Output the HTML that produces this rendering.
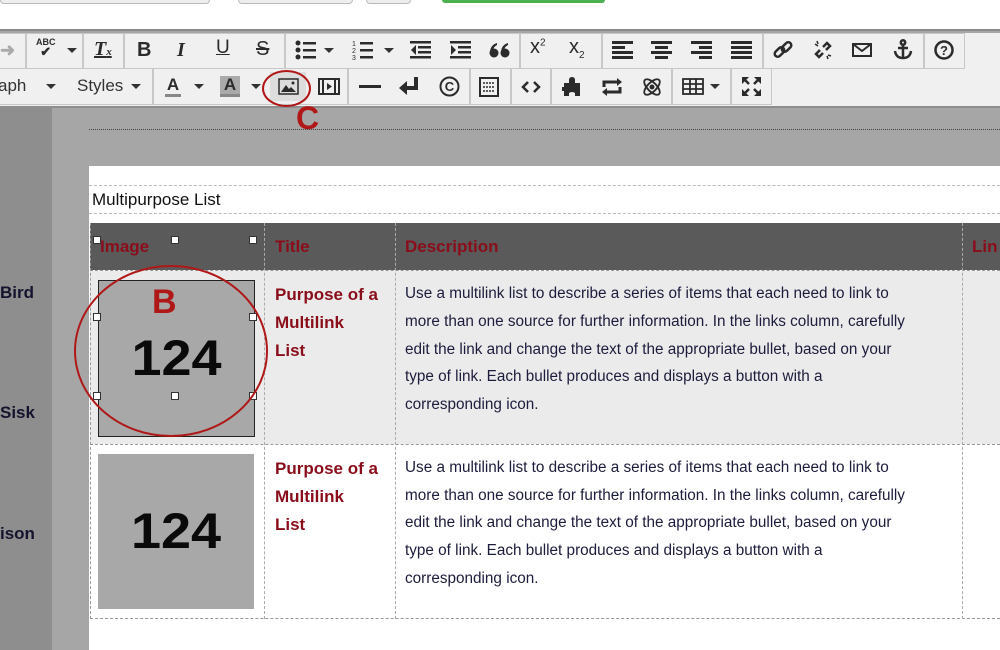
<!DOCTYPE html>
<html><head><meta charset="utf-8"><style>
*{margin:0;padding:0;box-sizing:border-box}
body{width:1000px;height:650px;overflow:hidden;position:relative;background:#a6a6a6;font-family:"Liberation Sans",sans-serif}
.a{position:absolute}
.g{position:absolute;border:1px solid #c8c8c8;background:#f0f0f0}
.i{position:absolute;color:#2b2b2b;font-weight:bold;text-align:center}
.car{position:absolute;width:0;height:0;border-left:5px solid transparent;border-right:5px solid transparent;border-top:5px solid #333}
.d{position:absolute;white-space:nowrap;font-size:15.3px;color:#1c1c3c;left:405px}
.t{position:absolute;left:275px;font-size:17px;font-weight:bold;color:#8a0d1a;white-space:nowrap}
.h{position:absolute;width:8px;height:8px;background:#fff;border:1px solid #333}
.n{position:absolute;font-size:50px;font-weight:bold;color:#0a0a0a;text-align:center;transform:scaleX(1.08)}
</style></head><body>
<div class="a" style="left:0;top:0;width:1000px;height:31px;background:#fff;border-bottom:2px solid #8a8a8a"></div>
<div class="a" style="left:0;top:0;width:210px;height:4px;border:1px solid #bbb;border-top:none;border-radius:0 0 4px 4px;background:#eee"></div>
<div class="a" style="left:238px;top:0;width:115px;height:4px;border:1px solid #bbb;border-top:none;border-radius:0 0 4px 4px;background:#eee"></div>
<div class="a" style="left:366px;top:0;width:45px;height:4px;border:1px solid #bbb;border-top:none;border-radius:0 0 4px 4px;background:#eee"></div>
<div class="a" style="left:442px;top:0;width:163px;height:3px;background:#4caf50;border-radius:0 0 3px 3px"></div>
<div class="a" style="left:0;top:33px;width:1000px;height:75px;background:#f0f0f0;border-bottom:2px solid #8e8e8e"></div>
<div class="g" style="left:-2px;top:33px;width:28px;height:36px"></div>
<div class="g" style="left:26px;top:33px;width:57px;height:36px"></div>
<div class="g" style="left:83px;top:33px;width:41px;height:36px"></div>
<div class="g" style="left:124px;top:33px;width:161px;height:36px"></div>
<div class="g" style="left:285px;top:33px;width:235px;height:36px"></div>
<div class="g" style="left:520px;top:33px;width:82px;height:36px"></div>
<div class="g" style="left:602px;top:33px;width:161px;height:36px"></div>
<div class="g" style="left:763px;top:33px;width:161px;height:36px"></div>
<div class="g" style="left:924px;top:33px;width:41px;height:36px"></div>
<div class="g" style="left:-2px;top:68px;width:155px;height:37px"></div>
<div class="g" style="left:153px;top:68px;width:195px;height:37px"></div>
<div class="g" style="left:348px;top:68px;width:122px;height:37px"></div>
<div class="g" style="left:470px;top:68px;width:41px;height:37px"></div>
<div class="g" style="left:511px;top:68px;width:40px;height:37px"></div>
<div class="g" style="left:551px;top:68px;width:121px;height:37px"></div>
<div class="g" style="left:672px;top:68px;width:59px;height:37px"></div>
<div class="g" style="left:731px;top:68px;width:41px;height:37px"></div>
<div class="i" style="left:0;top:40px;font-size:18px;color:#aaa">➜</div>
<div class="i" style="left:36px;top:38px;font-size:9px;line-height:9px">ABC<br><span style="font-size:13px">✔</span></div>
<div class="car" style="left:67px;top:48px"></div>
<div class="i" style="left:94px;top:38px;font-size:20px;font-style:italic;font-family:'Liberation Serif',serif;text-decoration:underline">T<span style="font-size:11px">x</span></div>
<div class="i" style="left:137px;top:39px;font-size:20px">B</div>
<div class="i" style="left:177px;top:39px;font-size:20px;font-style:italic;font-family:'Liberation Serif',serif">I</div>
<div class="i" style="left:216px;top:37px;font-size:19px;text-decoration:underline;font-weight:normal">U</div>
<div class="i" style="left:256px;top:38px;font-size:20px;text-decoration:line-through;font-weight:normal">S</div>
<svg class="a" style="left:295px;top:40px" width="22" height="20"><g fill="#2b2b2b"><circle cx="3" cy="3" r="2.5"/><circle cx="3" cy="10" r="2.5"/><circle cx="3" cy="17" r="2.5"/><rect x="8" y="2" width="13" height="2.5"/><rect x="8" y="9" width="13" height="2.5"/><rect x="8" y="16" width="13" height="2.5"/></g></svg>
<div class="car" style="left:324px;top:48px"></div>
<svg class="a" style="left:352px;top:40px" width="22" height="20"><g fill="#2b2b2b"><text x="0" y="6" font-size="7" font-family="Liberation Sans">1</text><text x="0" y="13" font-size="7" font-family="Liberation Sans">2</text><text x="0" y="20" font-size="7" font-family="Liberation Sans">3</text><rect x="8" y="2" width="13" height="2.5"/><rect x="8" y="9" width="13" height="2.5"/><rect x="8" y="16" width="13" height="2.5"/></g></svg>
<div class="car" style="left:384px;top:48px"></div>
<svg class="a" style="left:410px;top:41px" width="21" height="18"><g fill="#2b2b2b"><rect x="0" y="0" width="21" height="2.5"/><rect x="8" y="5" width="13" height="2.5"/><rect x="8" y="10" width="13" height="2.5"/><rect x="0" y="15" width="21" height="2.5"/><path d="M6 4 L1 9 L6 14Z"/></g></svg>
<svg class="a" style="left:450px;top:41px" width="21" height="18"><g fill="#2b2b2b"><rect x="0" y="0" width="21" height="2.5"/><rect x="8" y="5" width="13" height="2.5"/><rect x="8" y="10" width="13" height="2.5"/><rect x="0" y="15" width="21" height="2.5"/><path d="M1 4 L6 9 L1 14Z"/></g></svg>
<svg class="a" style="left:489px;top:42px" width="22" height="16"><g fill="#2b2b2b"><circle cx="5" cy="11" r="4.5"/><circle cx="16" cy="11" r="4.5"/><path d="M1 11 Q1 3 8 1 L8 3 Q4 5 4 9Z M12 11 Q12 3 19 1 L19 3 Q15 5 15 9Z"/></g></svg>
<div class="i" style="left:530px;top:36px;font-size:20px;font-weight:normal">x<sup style="font-size:10px">2</sup></div>
<div class="i" style="left:569px;top:36px;font-size:20px;font-weight:normal">x<sub style="font-size:10px">2</sub></div>
<svg class="a" style="left:612px;top:41px" width="21" height="18"><g fill="#2b2b2b"><rect x="0" y="0" width="21" height="3"/><rect x="0" y="5" width="13" height="3"/><rect x="0" y="10" width="21" height="3"/><rect x="0" y="15" width="21" height="3"/></g></svg>
<svg class="a" style="left:651px;top:41px" width="21" height="18"><g fill="#2b2b2b"><rect x="0" y="0" width="21" height="3"/><rect x="4" y="5" width="13" height="3"/><rect x="0" y="10" width="21" height="3"/><rect x="4" y="15" width="13" height="3"/></g></svg>
<svg class="a" style="left:691px;top:41px" width="21" height="18"><g fill="#2b2b2b"><rect x="0" y="0" width="21" height="3"/><rect x="8" y="5" width="13" height="3"/><rect x="0" y="10" width="21" height="3"/><rect x="8" y="15" width="13" height="3"/></g></svg>
<svg class="a" style="left:731px;top:41px" width="21" height="18"><g fill="#2b2b2b"><rect x="0" y="0" width="21" height="3"/><rect x="0" y="5" width="21" height="3"/><rect x="0" y="10" width="21" height="3"/><rect x="0" y="15" width="21" height="3"/></g></svg>
<svg class="a" style="left:773px;top:40px" width="20" height="20"><g fill="none" stroke="#2b2b2b" stroke-width="2.5"><rect x="1" y="9" width="11" height="6" rx="3" transform="rotate(-45 6.5 12)"/><rect x="8" y="4" width="11" height="6" rx="3" transform="rotate(-45 13.5 7)"/></g></svg>
<svg class="a" style="left:813px;top:40px" width="20" height="20"><g fill="none" stroke="#2b2b2b" stroke-width="2.5"><path d="M7 10 L3 14 L6 17 L10 13"/><path d="M13 10 L17 6 L14 3 L10 7"/><path d="M2 4l3 2M4 1l1 3M15 19l-1-3M18 16l-3-1" stroke-width="1.5"/></g></svg>
<svg class="a" style="left:852px;top:43px" width="20" height="14"><g fill="none" stroke="#2b2b2b" stroke-width="2"><rect x="1" y="1" width="18" height="12"/><path d="M1 1 L10 8 L19 1"/></g></svg>
<svg class="a" style="left:893px;top:39px" width="20" height="21"><g fill="none" stroke="#2b2b2b" stroke-width="2.5"><circle cx="10" cy="3.5" r="2.2"/><path d="M10 6 V19 M5 9 H15 M2 12 Q3 19 10 19 Q17 19 18 12"/></g></svg>
<svg class="a" style="left:934px;top:40px" width="20" height="20"><circle cx="10" cy="10" r="8.5" fill="none" stroke="#2b2b2b" stroke-width="2.5"/><text x="10" y="15" font-size="13" font-weight="bold" text-anchor="middle" fill="#2b2b2b" font-family="Liberation Sans">?</text></svg>
<div class="a" style="left:-2px;top:76px;font-size:17px;color:#333">aph</div>
<div class="car" style="left:46px;top:84px"></div>
<div class="a" style="left:77px;top:76px;font-size:17px;color:#333">Styles</div>
<div class="car" style="left:131px;top:84px"></div>
<div class="i" style="left:165px;top:76px;font-size:17px;border-bottom:3px solid #888;line-height:18px;width:16px">A</div>
<div class="car" style="left:194px;top:84px"></div>
<div class="i" style="left:220px;top:76px;font-size:17px;background:#aaa;border-bottom:3px solid #888;line-height:18px;width:20px">A</div>
<div class="car" style="left:251px;top:84px"></div>
<div class="a" style="left:270px;top:72px;width:36px;height:29px;background:#ddd"></div>
<svg class="a" style="left:278px;top:78px" width="21" height="17"><rect x="1" y="1" width="19" height="15" fill="none" stroke="#2b2b2b" stroke-width="1.5"/><path d="M3 14 L8 7 L11 11 L13 9 L18 14Z" fill="#2b2b2b"/><circle cx="15" cy="5" r="1.5" fill="#2b2b2b"/></svg>
<svg class="a" style="left:318px;top:78px" width="22" height="17"><rect x="1" y="1" width="20" height="15" fill="none" stroke="#2b2b2b" stroke-width="2"/><path d="M5 1V16M17 1V16" stroke="#2b2b2b" stroke-width="2"/><path d="M9 5 L14 8.5 L9 12Z" fill="#2b2b2b"/></svg>
<div class="a" style="left:359px;top:85px;width:22px;height:3px;background:#2b2b2b"></div>
<svg class="a" style="left:398px;top:76px" width="22" height="20"><path d="M18 1 V12 H7" fill="none" stroke="#2b2b2b" stroke-width="4"/><path d="M9 5 L1 12 L9 19Z" fill="#2b2b2b"/></svg>
<svg class="a" style="left:439px;top:76px" width="21" height="21"><circle cx="10.5" cy="10.5" r="9" fill="none" stroke="#2b2b2b" stroke-width="2"/><text x="10.5" y="15" font-size="13" font-weight="bold" text-anchor="middle" fill="#2b2b2b" font-family="Liberation Sans">C</text></svg>
<svg class="a" style="left:479px;top:77px" width="20" height="20"><rect x="1" y="1" width="18" height="18" fill="none" stroke="#2b2b2b" stroke-width="2"/><path d="M4 6H16M4 10H16M4 14H16" stroke="#2b2b2b" stroke-width="1.5" stroke-dasharray="2 1"/></svg>
<svg class="a" style="left:521px;top:80px" width="20" height="14"><path d="M7 2 L2 7 L7 12 M13 2 L18 7 L13 12" fill="none" stroke="#2b2b2b" stroke-width="2.5"/></svg>
<svg class="a" style="left:561px;top:76px" width="22" height="21"><path d="M3 7 H8 V4 Q8 1 11 1 Q14 1 14 4 V7 H19 V20 H14 V17 Q11 15 8 17 V20 H3 V15 H1 V11 H3Z" fill="#2b2b2b"/></svg>
<svg class="a" style="left:601px;top:77px" width="22" height="20"><g fill="none" stroke="#2b2b2b" stroke-width="3"><path d="M3 10 V5 H17"/><path d="M19 10 V15 H5"/></g><path d="M16 1 L21 5 L16 9Z M6 11 L1 15 L6 19Z" fill="#2b2b2b"/></svg>
<svg class="a" style="left:641px;top:76px" width="22" height="22"><g fill="none" stroke="#2b2b2b" stroke-width="1.8"><ellipse cx="11" cy="11" rx="10" ry="4.5" transform="rotate(45 11 11)"/><ellipse cx="11" cy="11" rx="10" ry="4.5" transform="rotate(-45 11 11)"/></g><circle cx="11" cy="11" r="2.5" fill="#2b2b2b"/></svg>
<svg class="a" style="left:682px;top:78px" width="22" height="17"><g fill="none" stroke="#2b2b2b" stroke-width="1.8"><rect x="1" y="1" width="20" height="15"/><path d="M1 6H21M1 11H21M8 1V16M14 1V16"/></g></svg>
<div class="car" style="left:710px;top:84px"></div>
<svg class="a" style="left:741px;top:76px" width="21" height="21"><g fill="#2b2b2b"><path d="M1 1H8L1 8Z M20 1H13L20 8Z M1 20H8L1 13Z M20 20H13L20 13Z"/></g><g stroke="#2b2b2b" stroke-width="2.5"><path d="M3 3L8 8M18 3L13 8M3 18L8 13M18 18L13 13"/></g></svg>
<div class="a" style="left:262px;top:70px;width:49px;height:37px;border:2px solid #b01818;border-radius:50%"></div>
<div class="a" style="left:296px;top:100px;font-size:32px;font-weight:bold;color:#b01818">C</div>
<div class="a" style="left:0;top:108px;width:52px;height:542px;background:#8e8e8e"></div>
<div class="a" style="left:0;top:283px;font-size:17px;font-weight:bold;color:#14142e">Bird</div>
<div class="a" style="left:0;top:403px;font-size:17px;font-weight:bold;color:#14142e">Sisk</div>
<div class="a" style="left:0;top:524px;font-size:17px;font-weight:bold;color:#14142e">ison</div>
<div class="a" style="left:89px;top:129px;width:911px;border-top:1px dotted #444"></div>
<div class="a" style="left:89px;top:166px;width:911px;height:484px;background:#fff"></div>
<div class="a" style="left:89px;top:185px;width:911px;border-top:1px dashed #bbb"></div>
<div class="a" style="left:92px;top:190px;font-size:17px;color:#111">Multipurpose List</div>
<div class="a" style="left:89px;top:213px;width:911px;border-top:1px dashed #bbb"></div>
<div class="a" style="left:90px;top:223px;width:910px;height:47px;background:#5a5a5a"></div>
<div class="a" style="left:100px;top:237px;font-size:17px;font-weight:bold;color:#8a0d1a">Image</div>
<div class="a" style="left:275px;top:237px;font-size:17px;font-weight:bold;color:#8a0d1a">Title</div>
<div class="a" style="left:405px;top:237px;font-size:17px;font-weight:bold;color:#8a0d1a">Description</div>
<div class="a" style="left:972px;top:237px;font-size:17px;font-weight:bold;color:#8a0d1a">Lin</div>
<div class="a" style="left:90px;top:271px;width:910px;height:173px;background:#ebebeb"></div>
<div class="a" style="left:90px;top:270px;width:910px;border-top:1px dashed #999"></div>
<div class="a" style="left:90px;top:444px;width:910px;border-top:1px dashed #999"></div>
<div class="a" style="left:90px;top:618px;width:910px;border-top:1px dashed #999"></div>
<div class="a" style="left:90px;top:223px;height:396px;border-left:1px dashed #999"></div>
<div class="a" style="left:264px;top:223px;height:396px;border-left:1px dashed #aaa"></div>
<div class="a" style="left:395px;top:223px;height:396px;border-left:1px dashed #aaa"></div>
<div class="a" style="left:962px;top:223px;height:396px;border-left:1px dashed #aaa"></div>
<div class="a" style="left:98px;top:280px;width:157px;height:157px;background:#a8a8a8;border:1px solid #222"></div>
<div class="n" style="left:98px;top:329px;width:157px">124</div>
<div class="a" style="left:98px;top:454px;width:156px;height:155px;background:#a8a8a8"></div>
<div class="n" style="left:98px;top:502px;width:156px">124</div>
<div class="h" style="left:93px;top:236px"></div><div class="h" style="left:171px;top:236px"></div><div class="h" style="left:249px;top:236px"></div>
<div class="h" style="left:93px;top:313px"></div><div class="h" style="left:249px;top:313px"></div>
<div class="h" style="left:93px;top:392px"></div><div class="h" style="left:171px;top:392px"></div><div class="h" style="left:249px;top:392px"></div>
<div class="a" style="left:74px;top:265px;width:194px;height:172px;border:2px solid #b01818;border-radius:50%"></div>
<div class="a" style="left:152px;top:283px;font-size:34px;font-weight:bold;color:#b01818">B</div>
<div class="t" style="top:285px">Purpose of a</div>
<div class="t" style="top:313px">Multilink</div>
<div class="t" style="top:341px">List</div>
<div class="t" style="top:459px">Purpose of a</div>
<div class="t" style="top:487px">Multilink</div>
<div class="t" style="top:515px">List</div>
<div class="d" style="top:285px">Use a multilink list to describe a series of items that each need to link to</div>
<div class="d" style="top:313px">more than one source for further information. In the links column, carefully</div>
<div class="d" style="top:341px">edit the link and change the text of the appropriate bullet, based on your</div>
<div class="d" style="top:368px">type of link. Each bullet produces and displays a button with a</div>
<div class="d" style="top:396px">corresponding icon.</div>
<div class="d" style="top:459px">Use a multilink list to describe a series of items that each need to link to</div>
<div class="d" style="top:487px">more than one source for further information. In the links column, carefully</div>
<div class="d" style="top:514px">edit the link and change the text of the appropriate bullet, based on your</div>
<div class="d" style="top:542px">type of link. Each bullet produces and displays a button with a</div>
<div class="d" style="top:570px">corresponding icon.</div>
</body></html>
